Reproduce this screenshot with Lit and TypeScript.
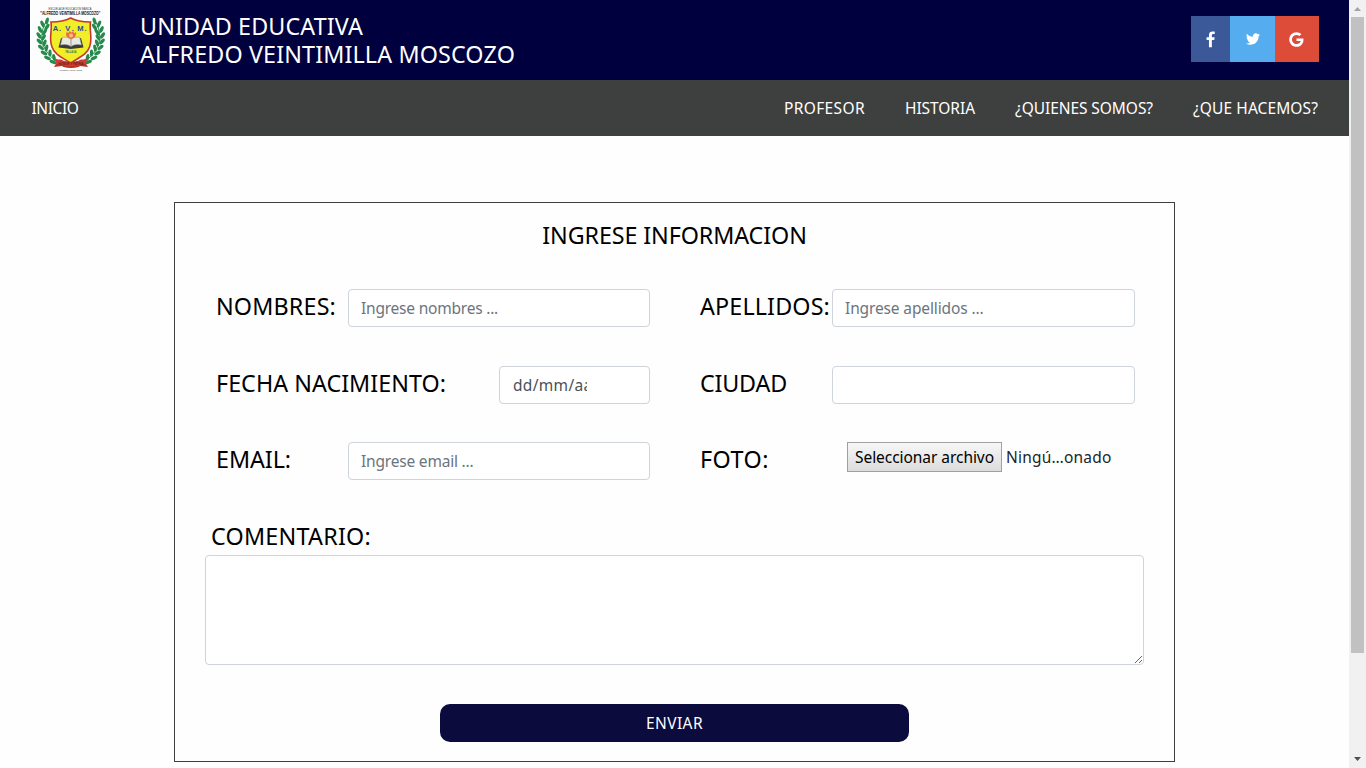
import { LitElement, html, css, svg } from "lit";
import { customElement, property } from "lit/decorators.js";

const FONT = '"Noto Sans"';
const measureCtx = document.createElement("canvas").getContext("2d")!;

/** Letter spacing that makes a text of the given size take up the given width. */
function tracking(text: string, size: number, width: number): string {
  measureCtx.font = `${size}px ${FONT}`;
  const natural = measureCtx.measureText(text).width;
  return `letter-spacing:${((width - natural) / [...text].length).toFixed(3)}px`;
}

@customElement("tracked-text")
class TrackedText extends LitElement {
  static styles = css`
    :host { display: inline-block; white-space: pre; }
  `;
  @property() text = "";
  @property({ type: Number }) size = 15.5;
  @property({ type: Number }) width = 0;
  render() {
    return html`<span style=${tracking(this.text, this.size, this.width)}>${this.text}</span>`;
  }
}

const big = (text: string, width: number) =>
  html`<tracked-text class="big" .text=${text} .size=${23.3} .width=${width}></tracked-text>`;
const small = (text: string, width: number) =>
  html`<tracked-text class="small" .text=${text} .size=${15.5} .width=${width}></tracked-text>`;

// Leaves follow each side of the shield: x, y, rotation.
const LEAVES: [number, number, number][] = [
  [17, 21, 15], [12.5, 24, -25], [17, 27, 35], [10, 29.5, -25], [14.5, 32, 35],
  [9, 35.5, -35], [13.5, 37.5, 30], [9.5, 41.5, -45], [14.5, 43, 20], [11, 47.5, -50],
  [16.5, 48, 10], [14, 53, -60], [20, 53, 0], [17.5, 58, -65], [24, 57.5, -10], [23, 62, -70],
];
const laurel = () => svg`
  <path d="M17 20C8 34 10 51 29 63" fill="none" stroke="#2c8a50" stroke-width="1"/>
  ${LEAVES.map(([x, y, r]) => svg`<ellipse cx=${x} cy=${y} rx="1.7" ry="3.6" fill="#258a4b" transform=${`rotate(${r} ${x} ${y})`}/>`)}`;

const crest = html`<svg class="crest" viewBox="0 0 80 80" width="80" height="80">
  <text x="40" y="10.2" font-size="3.4" text-anchor="middle" textLength="43" lengthAdjust="spacingAndGlyphs" fill="#333">ESCUELA DE EDUCACIÓN BÁSICA</text>
  <text x="40.3" y="14.6" font-size="5" font-weight="bold" text-anchor="middle" textLength="60" lengthAdjust="spacingAndGlyphs" fill="#111">"ALFREDO VEINTIMILLA MOSCOZO"</text>
  <g>${laurel()}</g>
  <g transform="translate(81.5 0) scale(-1 1)">${laurel()}</g>
  <path d="M21 22Q33 22 40.7 18Q48 22 60.5 22C59 31 63 38 59.500 47C57 55 48 58 40.700 63C33 58 24.500 55 22 47C18.500 38 22.500 31 21 22Z" fill="#f1ee27" stroke="#c4382c" stroke-width="1.600"/>
  <g font-size="7.600" font-weight="bold" fill="#2b4c9a">
    <text x="22.700" y="30.500" textLength="8.500">A.</text><text x="35.300" y="30.500" textLength="8.500">V.</text><text x="47.200" y="30.500" textLength="9.500">M.</text>
  </g>
  <path d="M41 39C36 38 35 34 37 31.500L38 33.500L39.500 31L41.500 32.500L43.500 31L44 33.500L46 32C46.500 35.500 45 38.500 41 39Z" fill="#ee6a4c"/>
  <circle cx="41" cy="35.500" r="2" fill="#ffc36c"/>
  <path d="M28.500 47.500L31 38L41 41L51 38L53.500 47.500L41 49Z" fill="#3a3b3b"/>
  <path d="M30.500 45L32.500 37Q38 36.500 41 39.500Q44 36.500 49.500 37L51.500 45Q45 43.500 41 46.500Q37 43.500 30.500 45Z" fill="#e9e9e4" stroke="#8c8c86" stroke-width=".5"/>
  <path d="M41 39.500V46" stroke="#777" stroke-width=".7"/>
  <text x="41" y="53" font-size="3" font-weight="bold" text-anchor="middle" textLength="11" lengthAdjust="spacingAndGlyphs" fill="#3f6f5c">PALLAGA</text>
  <path d="M25 60L31 59.500L34 61Q41 63.500 48 61L51 59.500L57 60L55.500 63L58 67L50 66L48.500 67Q41 69 33.500 67L32 66L24 67L26.500 63Z" fill="#bd3028"/>
  <path d="M25 58.500Q41 65.500 57 58.500L55.500 63.500Q41 68.500 26.500 63.500Z" fill="#d23c31"/>
  <text x="41" y="64.600" font-size="3.400" font-weight="bold" text-anchor="middle" textLength="25" lengthAdjust="spacingAndGlyphs" fill="#701c18">HONOR Y PATRIA</text>
  <text x="41" y="70.500" font-size="2.400" text-anchor="middle" fill="#444">CUENCA ECUADOR</text>
</svg>`;

@customElement("app-root")
class AppRoot extends LitElement {
  static styles = css`
    :host { display: flex; width: 1366px; height: 768px; overflow: hidden; background: #fefefe;
      font-family: "Noto Sans", "Open Sans", sans-serif; font-size: 15.5px; line-height: 24px; color: #000; }
    * { box-sizing: border-box; }
    .page { width: 1349px; display: flex; flex-direction: column; }
    .big { font-size: 23.3px; line-height: 28px; }
    .small { font-size: 15.5px; line-height: 24px; }
    .head { height: 80px; flex: none; background: #00003f; display: flex; padding: 0 30px; color: #fefefe; }
    .crest { display: block; background: #fdfdfd; font-family: "Liberation Sans", sans-serif; }
    .title { display: flex; flex-direction: column; align-items: flex-start; margin-left: 30px; padding-top: 12px; flex: 1; }
    .social { display: flex; height: 46px; margin-top: 16px; }
    .social span { display: flex; align-items: center; justify-content: center; }
    .social svg { display: block; fill: #fff; }
    .fb { width: 39px; background: #3b5998; }
    .tw { width: 45px; background: #55acee; }
    .go { width: 44px; background: #dd4b39; padding-right: 1px; }
    .nav { height: 56px; flex: none; background: #3e403f; color: #fefefe; display: flex; align-items: center; gap: 40px; padding: 0 31px 0 31.5px; }
    .nav .first { flex: 1; }
    .card { width: 1001px; height: 560px; margin: 66px 0 0 174px; border: 1px solid #3e3f3e; padding: 18px 30px 0; display: flex; flex-direction: column; }
    .heading { text-align: center; height: 68px; }
    .grid { display: grid; grid-template-columns: 484px 445px; grid-template-rows: 77px 76px 76px; padding-left: 11px; }
    .field { display: flex; align-items: flex-start; }
    .label { width: 132px; flex: none; padding-top: 3px; display: block; }
    .label.wide { width: 283px; }
    .input { height: 38px; flex: none; width: 302px; border: 1px solid #ced4da; border-radius: 4px; background: #fff; padding: 6px 12px;
      font: inherit; color: #495057; outline: none; margin: 0; }
    .right .input { width: 303px; }
    .input::placeholder { color: #6c757d; opacity: 1; }
    .date { width: 151px; padding-left: 13px; }
    .clip { display: block; overflow: hidden; width: 73.5px; height: 24px; white-space: nowrap; }
    .file { display: flex; align-items: center; margin-left: 15px; height: 30px; color: #212529; }
    .choose { font: inherit; color: #000; width: 155px; height: 30px; padding: 0 0 0 7px; margin-right: 4px; border: 1px solid #a0a0a0; border-radius: 0;
      background: linear-gradient(#f7f7f7, #dcdcdc); text-align: left; line-height: 28px; }
    .comment-label { padding: 4px 0 0 6px; height: 37px; display: block; }
    .comment { display: block; width: 939px; height: 110px; border: 1px solid #ced4da; border-radius: 4px; background: #fff; resize: vertical; margin: 0; outline: none; }
    .send { display: block; width: 469px; height: 38px; margin: 39px 0 0 235px; border: 0; border-radius: 10px; background: #0b0b3e; color: #fefefe; font: inherit; padding: 0; }
    .scroll { width: 17px; height: 768px; background: #f1f1f1; display: flex; flex-direction: column; align-items: center; }
    .arrow { display: block; width: 17px; height: 17px; flex: none; }
    .track { flex: 1; width: 13px; }
    .thumb { height: 636px; background: #c1c1c1; }
  `;

  private input(ph: string, width: number) {
    return html`<input class="input" placeholder=${ph} style=${ph ? tracking(ph, 15.5, width) : ""}>`;
  }

  render() {
    return html`
      <div class="page">
        <header class="head">
          ${crest}
          <div class="title">${big("UNIDAD EDUCATIVA", 223)}${big("ALFREDO VEINTIMILLA MOSCOZO", 375)}</div>
          <div class="social">
            <span class="fb"><svg width="17" height="17" viewBox="0 0 1792 1792"><path d="M1343 12v264h-157q-86 0-116 36t-30 108v189h293l-39 296h-254v759h-306v-759h-255v-296h255v-218q0-186 104-288.500t277-102.500q147 0 228 12z" transform="translate(0 40)"/></svg></span>
            <span class="tw"><svg width="16" height="16" viewBox="0 0 1792 1792"><path d="M1684 408q-67 98-162 167 1 14 1 42 0 130-38 259.500t-115.500 248.500-184.500 210.500-258 146-323 54.500q-271 0-496-145 35 4 78 4 225 0 401-138-105-2-188-64.500t-114-159.500q33 5 61 5 43 0 85-11-112-23-185.500-111.500t-73.500-205.500v-4q68 38 146 41-66-44-105-115t-39-154q0-88 44-163 121 149 294.500 238.500t371.500 99.500q-8-38-8-74 0-134 94.500-228.500t228.500-94.500q140 0 236 102 109-21 205-78-37 115-142 178 93-10 186-50z"/></svg></span>
            <span class="go"><svg width="17" height="17" viewBox="0 0 1792 1792"><path d="M896 786h725q12 67 12 128 0 217-91 387.500t-259.500 266.500-386.500 96q-157 0-299-60.500t-245-163.500-163.500-245-60.500-299 60.500-299 163.500-245 245-163.500 299-60.500q300 0 515 201l-209 201q-123-119-306-119-129 0-238.500 65t-173.500 176.500-64 243.500 64 243.500 173.500 176.500 238.500 65q87 0 160-24t120-60 82-82 51.500-87 22.500-78h-436v-264z"/></svg></span>
          </div>
        </header>
        <nav class="nav">
          <span class="first">${small("INICIO", 47)}</span>
          ${small("PROFESOR", 81)}${small("HISTORIA", 70)}${small("¿QUIENES SOMOS?", 138)}${small("¿QUE HACEMOS?", 125)}
        </nav>
        <main class="card">
          <div class="heading">${big("INGRESE INFORMACION", 264.5)}</div>
          <div class="grid">
            <div class="field"><span class="label">${big("NOMBRES:", 120)}</span>${this.input("Ingrese nombres ...", 137)}</div>
            <div class="field right"><span class="label">${big("APELLIDOS:", 130)}</span>${this.input("Ingrese apellidos ...", 138.5)}</div>
            <div class="field"><span class="label wide">${big("FECHA NACIMIENTO:", 230)}</span>
              <div class="input date"><span class="clip" style=${tracking("dd/mm/a", 15.5, 70.5)}>dd/mm/aaaa</span></div></div>
            <div class="field right"><span class="label">${big("CIUDAD", 87)}</span>${this.input("", 0)}</div>
            <div class="field"><span class="label">${big("EMAIL:", 75)}</span>${this.input("Ingrese email ...", 112.5)}</div>
            <div class="field right"><span class="label">${big("FOTO:", 69)}</span>
              <div class="file"><button class="choose">${small("Seleccionar archivo", 139)}</button>${small("Ningú…onado", 105.5)}</div></div>
          </div>
          <div class="comment-label">${big("COMENTARIO:", 160)}</div>
          <textarea class="comment"></textarea>
          <button class="send">${small("ENVIAR", 57)}</button>
        </main>
      </div>
      <div class="scroll">
        <svg class="arrow" viewBox="0 0 17 17"><path d="M5 11h7L8.500 7z" fill="#a3a3a3"/></svg>
        <div class="track"><div class="thumb"></div></div>
        <svg class="arrow" viewBox="0 0 17 17"><path d="M5 6h7L8.500 10z" fill="#505050"/></svg>
      </div>`;
  }
}
